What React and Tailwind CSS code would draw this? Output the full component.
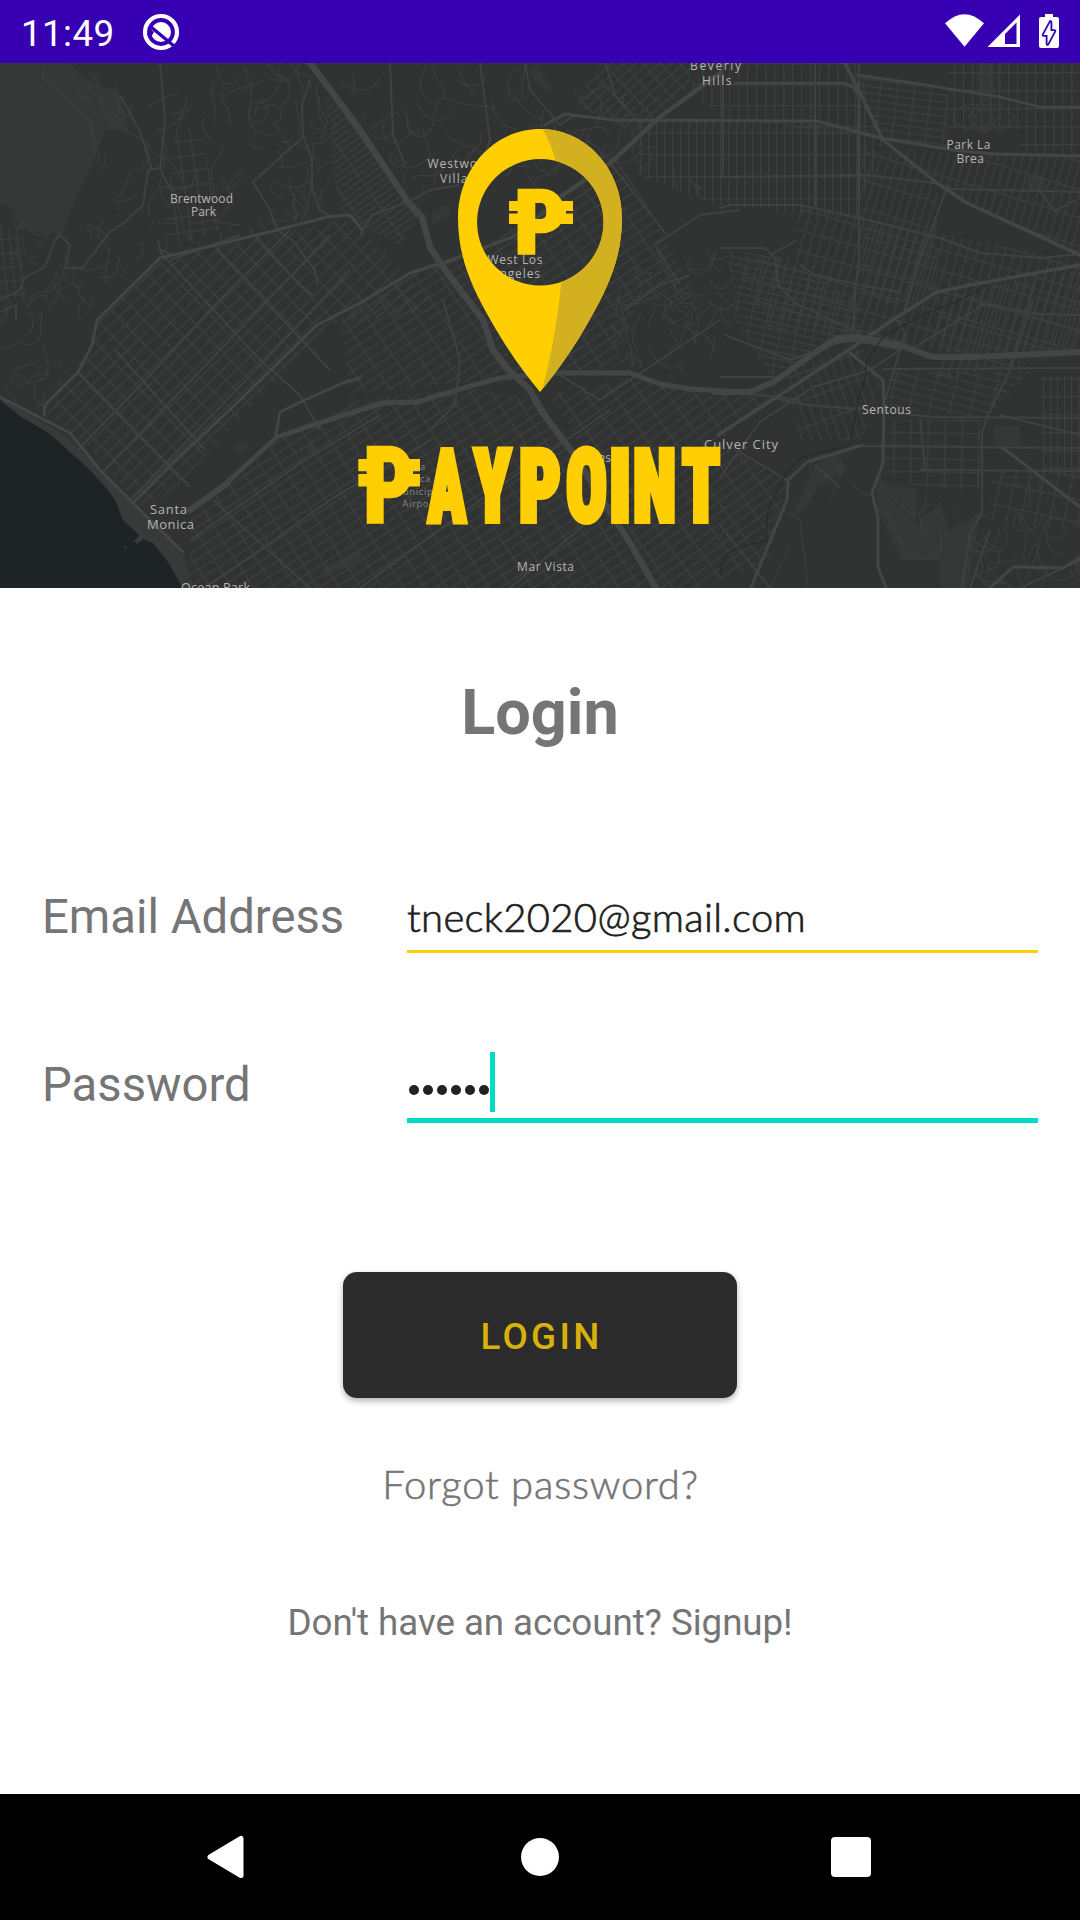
import React from "react";

/* Street grids: outline of the district, rotation and block size. */
const GRIDS = [
  { id: "g1", pts: "45,412 80,372 98,322 160,260 215,248 345,219 365,232 440,310 330,325 262,395 185,478 146,512 90,448", a: -44, w: 17, h: 10 },
  { id: "g2", pts: "190,515 228,488 290,430 360,400 470,388 540,400 650,588 190,588", a: -33, w: 18, h: 9 },
  { id: "g3", pts: "340,318 410,273 483,245 560,197 620,158 700,300 640,300 610,373 500,378 350,395", a: -34, w: 21, h: 9 },
  { id: "g4", pts: "640,120 720,120 857,125 883,140 857,218 720,206 640,175", a: 0, w: 8, h: 22 },
  { id: "g5", pts: "700,63 856,63 880,138 720,118 690,90", a: 0, w: 9, h: 21 },
  { id: "g6", pts: "862,75 948,88 948,150 885,140 860,90", a: 7, w: 17, h: 7 },
  { id: "g7", pts: "948,63 1080,63 1080,155 1020,153 1020,130 948,130", a: 0, w: 9, h: 18 },
  { id: "g8", pts: "862,150 1080,158 1080,255 968,204 937,187 937,380 1080,352 1080,270 862,310", a: 17, w: 8, h: 27 },
  { id: "g9", pts: "800,206 862,218 1080,262 1080,352 970,357 860,335 770,330 735,260 795,255", a: 16, w: 9, h: 20 },
  { id: "g10", pts: "730,250 780,258 860,300 860,335 770,375 735,320", a: 12, w: 16, h: 7 },
  { id: "g11", pts: "550,395 640,376 720,395 780,390 720,440 787,480 770,560 700,588 660,588 600,480", a: -36, w: 22, h: 9 },
  { id: "g12", pts: "785,370 860,345 880,385 862,440 800,440", a: -20, w: 9, h: 26 },
  { id: "g13", pts: "890,372 1030,372 985,418 890,408", a: 14, w: 20, h: 8 },
  { id: "g14", pts: "1040,376 1080,376 1080,475 1043,475", a: 0, w: 7, h: 18 },
  { id: "g15", pts: "885,420 980,420 980,490 920,490 885,470", a: 1, w: 17, h: 13 },
  { id: "g16", pts: "600,63 690,63 690,85 640,135 575,105", a: -42, w: 14, h: 8 },
  { id: "g17", pts: "0,225 18,228 28,300 0,300", a: -6, w: 8, h: 14 },
  { id: "g18", pts: "325,95 360,130 420,215 400,245 360,225 340,215", a: -35, w: 24, h: 6 },
  { id: "g19", pts: "175,130 200,128 222,228 165,250 168,200", a: -8, w: 13, h: 15 },
  { id: "g20", pts: "990,470 1080,470 1080,530 990,520", a: 12, w: 14, h: 22 },
];

/* Hilly districts with winding residential streets. */
const HILLS = [
  { id: "h1", pts: "60,63 310,63 345,130 320,215 200,245 120,215 95,160 85,110", box: [60, 63, 290, 180], n: 95, seed: 7 },
  { id: "h2", pts: "0,215 60,235 110,215 165,235 70,330 78,372 40,410 0,395", box: [0, 215, 165, 190], n: 60, seed: 19 },
  { id: "h3", pts: "320,63 600,63 640,120 720,205 600,160 540,190 470,160 420,215 370,130", box: [320, 63, 380, 150], n: 95, seed: 31 },
  { id: "h4", pts: "640,250 730,250 740,340 680,375 620,365 600,330", box: [600, 250, 140, 125], n: 65, seed: 43 },
  { id: "h5", pts: "975,515 1080,500 1080,588 960,588", box: [960, 510, 120, 78], n: 34, seed: 57 },
  { id: "h6", pts: "800,450 870,460 875,500 910,490 960,510 940,540 880,510 800,500", box: [800, 450, 160, 90], n: 14, seed: 71 },
];

function windingStreets({ box, n, seed }) {
  let s = seed;
  const rnd = () => {
    s = (s * 16807) % 2147483647;
    return s / 2147483647;
  };
  for (let i = 0; i < 5; i++) rnd();
  let d = "";
  for (let i = 0; i < n; i++) {
    let x = box[0] + rnd() * box[2];
    let y = box[1] + rnd() * box[3];
    let dir = rnd() < 0.7 ? 1.2 + rnd() * 0.7 : rnd() * 6.3;
    let turn = (rnd() - 0.5) * 0.5;
    d += `M${x.toFixed(1)} ${y.toFixed(1)}`;
    const steps = 4 + Math.floor(rnd() * 8);
    for (let k = 0; k < steps; k++) {
      if (rnd() < 0.3) turn = (rnd() - 0.5) * 1.1;
      dir += turn;
      x += Math.cos(dir) * 5;
      y += Math.sin(dir) * 5;
      d += `L${x.toFixed(1)} ${y.toFixed(1)}`;
    }
  }
  return d;
}

const AVENUES = [
  "M0 300 20 290 24 278 45 267 55 240 60 235 70 245 65 268 82 268 110 232 125 222 143 205 148 170 160 168 168 185 175 192",
  "M120 95 140 132 152 170M160 63 165 120 160 170M310 80 302 105 303 135 312 160 312 190 320 210 333 218",
  "M253 182 303 137M253 182 270 210 277 230M0 312 16 305 16 320M170 260 240 235M158 240 160 250 172 255",
  "M160 252 260 360 300 395 320 430M78 372 190 487M115 350 205 450M217 250 330 370M250 230 300 285 313 295M277 230 292 240 315 270 318 285",
  "M78 450 153 372 215 305 290 230M130 500 270 355 350 270M100 475 225 345 330 235",
  "M213 500 310 588M190 540 305 460 380 415M205 588 260 550 330 500 430 440M360 588 480 500 610 410M510 588 590 520 690 450",
  "M390 63 393 135 405 165M480 63 490 140 480 170M525 63 530 90 560 125 575 115M605 63 615 95 628 110M610 163 667 235",
  "M360 235 372 215 408 202 430 190 460 185M437 267 483 248M443 300 460 360 455 405 430 430M560 375 600 400 720 320",
  "M625 310 660 285 690 275M655 245 700 215 740 210M655 245 680 285",
  "M720 208 730 205 800 205 860 218 940 238 980 253 1040 258 1080 254M720 177 867 175 935 183 953 189 1080 192M815 63 815 206",
  "M720 248 765 248 775 258 778 285 795 303 860 333M797 240 770 255M800 265 815 275 860 285 900 292M723 63 723 175",
  "M895 318 905 333 885 400M980 304 1040 314 1080 315M910 350 985 304M720 377 775 377M725 335 790 360 860 335",
  "M720 477 760 422 813 387 870 370 900 350M773 398 807 405 860 409 933 417 1080 418M883 369 1080 368M720 390 800 400",
  "M1033 300 1010 370 987 417 982 433 982 513 970 533 962 587M853 446 1080 448M920 418 925 470M920 470 1080 471",
  "M720 525 770 588M740 452 787 480M840 488 815 465M948 185 920 260 905 310M1000 415 1080 435",
  "M859 63 859 260 856 283 853 330M1040 192 1055 211 1075 200M990 530 970 588M1020 588 1080 560",
];

const HIGHWAYS = [
  { w: 6.5, d: "M308 60 360 130 408 202 422 217 430 247 443 267 483 320 493 350 507 368 530 390 542 412 573 453 607 507 630 543 657 590" },
  { w: 5, d: "M190 510 222 487 277 437 307 427 360 410 383 403 417 402 467 387 500 378 553 373 630 373 660 384 690 389 740 392" },
  { w: 6, d: "M715 392 750 392 772 383 803 361 832 341 850 337 875 341 905 347 933 357 973 357 1080 352" },
  { w: 8, d: "M838 339 858 338 900 346" },
  { w: 3, d: "M97 320 160 258 207 247 277 230 327 217 350 215 362 230M97 320 92 345 78 372 45 405 44 415" },
  { w: 3, d: "M133 503 173 463 240 400 317 325 360 303 410 273 460 257 483 248 513 237 560 200" },
  { w: 4.5, d: "M560 197 610 163 660 117 720 73" },
  { w: 3, d: "M545 125 565 114 613 120 817 121 880 138 953 150 993 154 1080 156" },
  { w: 3.5, d: "M845 63 857 87 883 140 937 183 967 203 1080 255" },
  { w: 2.5, d: "M735 83 843 83 853 87 857 93M859 80 859 200M857 75 907 82 1000 97 1040 107 1080 107" },
  { w: 3.5, d: "M718 435 777 397 853 347 897 317 937 292 970 285 1080 265" },
  { w: 3, d: "M750 590 787 500 788 480 807 462 853 448 862 445" },
  { w: 3, d: "M850 353 883 380 884 400 883 463 872 493 878 517 878 567 887 590" },
  { w: 3, d: "M1003 448 1080 507M990 588 1013 567 1063 568 1080 558" },
  { w: 3, d: "M0 397 70 433 100 470 147 517 183 552M275 440 280 412 305 400 345 382 360 378" },
  { w: 6, d: "M190 510 228 483" },
];

/* Place names: text, x, baseline, size, drawn width. */
const LABELS = [
  ["Brentwood", 170, 203, 12, 63],
  ["Park", 191, 216, 12, 25],
  ["Westwood", 427.5, 168, 12, 66],
  ["Village", 440, 182.5, 12, 43],
  ["West Los", 487.5, 263.5, 12, 55],
  ["Angeles", 491, 277.5, 12, 49],
  ["Beverly", 690, 69.5, 12, 51],
  ["Hills", 702, 85, 12, 29.5],
  ["Park La", 946.5, 148.5, 12, 44],
  ["Brea", 956.5, 162.5, 12, 27.5],
  ["Santa", 150, 513.5, 13, 37],
  ["Monica", 147, 529, 13, 47],
  ["Ocean Park", 181, 591.5, 12.5, 69],
  ["Mar Vista", 517, 570.5, 12, 57],
  ["Sentous", 862, 414, 12, 49],
  ["Culver City", 704, 449, 13, 74],
  ["Palms", 577, 461.5, 12, 34],
];

function CityMap() {
  return (
    <g>
      <defs>
        {GRIDS.map((g) => (
          <pattern key={g.id} id={g.id} width={g.w} height={g.h} patternUnits="userSpaceOnUse" patternTransform={`rotate(${g.a})`}>
            <path d={`M0 .6H${g.w}M.6 0V${g.h}`} stroke="#3d3f3e" strokeWidth="1.1" />
          </pattern>
        ))}
        {HILLS.map((h) => (
          <clipPath key={h.id} id={h.id}>
            <polygon points={h.pts} />
          </clipPath>
        ))}
      </defs>
      <rect y="63" width="1080" height="525" fill="#313332" />
      <g fill="#363837">
        <path d="M0 63H70L85 80 118 90 130 130 105 130 92 165 75 200 62 235 20 230 10 205 0 203Z" />
        <path d="M792 515 815 465 835 455 848 470 818 487 806 510Z" />
        <path d="M875 475 890 485 916 488 916 527 940 505 950 530 980 512 968 588 940 588 940 560 900 560 878 510Z" />
        <path d="M432 214 450 203 450 215 432 226ZM1028 175 1044 175 1044 195 1028 188ZM978 63H994V97H978ZM535 65 554 88 545 92 528 72ZM994 426H1020V445H994Z" />
        <path d="M320 570 360 548 360 560 325 578ZM234 448 244 440 250 447 240 455ZM310 440 320 450 312 456 305 446Z" />
      </g>
      {GRIDS.map((g) => (
        <polygon key={g.id} points={g.pts} fill={`url(#${g.id})`} />
      ))}
      <g fill="none" stroke="#3d3f3e" strokeWidth="1.1" strokeLinejoin="round">
        {HILLS.map((h) => (
          <path key={h.id} d={windingStreets(h)} clipPath={`url(#${h.id})`} />
        ))}
        <path d="M45 63 42 78 55 88 75 107 92 125 95 145M100 95 103 113 125 130 145 142 151 160" />
        <path d="M878 511 890 515 900 540 905 555 925 560 942 550 940 532 922 532 919 510 932 503" />
        <path d="M984 98 1000 117 984 133 968 117ZM984 106 994 117 984 127 974 117ZM955 110 967 105 1000 105 1015 117 1003 130 965 130 953 120Z" />
        <path d="M1000 477H1040V500M1005 485H1030V508M782 510 800 520 805 560 808 588M770 588 790 545" />
      </g>
      <g fill="none" stroke="#404241" strokeWidth="1.9" strokeLinejoin="round">
        {AVENUES.map((d, i) => (
          <path key={i} d={d} />
        ))}
      </g>
      <path d="M0 398Q30 415 62 433L90 460 118 488 145 515 183 552 194 588 180 588 0 500Z" fill="#383a39" />
      <g fill="none" stroke="#444645" strokeLinejoin="round" strokeLinecap="round">
        {HIGHWAYS.map((h, i) => (
          <path key={i} d={h.d} strokeWidth={h.w} />
        ))}
      </g>
      <path d="M720 573 724 556 735 549 766 540 768 510 785 475 800 458 850 445 858 400 865 378 867 360 885 335 923 315 960 300 990 284" fill="none" stroke="#292b2a" strokeWidth="1.2" />
      <path d="M0 400 20 416 50 434 90 470 107 489 115 500 123 520 136 532 143 539 153 543 168 562 184 590 0 590Z" fill="#1e2326" />
      <path d="M134 541 141 534 143 539 137 544Z" fill="#3a3c3b" />
      <circle cx="125.5" cy="547" r="1.6" fill="#303434" />
      <g fill="#b4b5b4" className="font-['Open_Sans','Noto_Sans',sans-serif] font-medium">
        {LABELS.map(([t, x, y, size, len]) => (
          <text key={t + y} x={x} y={y} fontSize={size} textLength={len}>
            {t}
          </text>
        ))}
        <g fontSize="9.5" textAnchor="middle" fill="#858786" letterSpacing=".6">
          <text x="412" y="470">Santa</text>
          <text x="413" y="482">Monica</text>
          <text x="418" y="494.5">Municipal</text>
          <text x="420" y="506.5">Airport</text>
        </g>
      </g>
    </g>
  );
}

/* Wordmark letters after the peso sign: letter, x, advance. */
const WORDMARK = [
  ["A", 428, 38],
  ["Y", 474, 37],
  ["P", 519, 42],
  ["O", 566, 41],
  ["I", 609, 22],
  ["N", 633, 43],
  ["T", 682, 38],
];

const heavy = "font-['Roboto',sans-serif] font-black [font-stretch:75%]";

function Logo() {
  return (
    <g fill="#ffcf03">
      <defs>
        <clipPath id="pin">
          <path
            clipRule="evenodd"
            d="M540 129C494 129 458 169 458 218C458 256 471 286 490.500 320C505 346 523 372 540 392C557 372 575 346 589.500 320C609 286 622 256 622 218C622 169 586 129 540 129ZM540.300 159.100A63.200 63.200 0 1 1 540.300 285.500A63.200 63.200 0 1 1 540.300 159.100Z"
          />
        </clipPath>
      </defs>
      <g clipPath="url(#pin)">
        <rect x="450" y="120" width="180" height="280" />
        <path d="M542 128Q551 143 556 162Q565 205 563 262Q558 332 541.500 392H640V128Z" fill="#d2b020" />
      </g>
      <g stroke="#ffcf03" strokeLinejoin="miter">
        <text x="514.500" y="253.700" fontSize="89" strokeWidth="2.500" textLength="52" lengthAdjust="spacingAndGlyphs" className={heavy}>P</text>
        <text x="363.500" y="522.500" fontSize="106" strokeWidth="2.500" textLength="51" lengthAdjust="spacingAndGlyphs" className={heavy}>P</text>
        {WORDMARK.map(([c, x, w]) => (
          <text key={c + x} x={x} y="520.700" fontSize="101" strokeWidth="6" textLength={w} lengthAdjust="spacingAndGlyphs" className={heavy}>
            {c}
          </text>
        ))}
      </g>
      <path d="M509 201H519V211H509ZM509 213.500H519V224H509ZM560 201H573V211H566V213.500H573V224H560Z" />
      <path d="M358.300 459H368V471.300H358.300ZM358.300 474H368V486.600H358.300ZM407 459H420V471.300H413V474H420V486.600H407Z" />
    </g>
  );
}

function StatusBar() {
  return (
    <header className="flex h-[63px] items-center bg-[#3700b3] text-white">
      <span className="ml-[21px] mt-[5px] text-[36.75px] leading-none tracking-[0.4px]">11:49</span>
      <svg viewBox="0 0 38 38" className="ml-[27px] size-[38px]" fill="none">
        <circle cx="19" cy="19" r="16" stroke="white" strokeWidth="4.200" />
        <circle cx="19" cy="19" r="10" fill="white" />
        <path d="M9 14 32 33" stroke="#3700b3" strokeWidth="3.400" />
        <path d="M7 15 12 19 9 24 5 22Z" fill="#3700b3" />
      </svg>
      <svg viewBox="940 0 140 63" className="ml-auto h-[63px] w-[140px]" fill="white">
        <path d="M945 23.300Q964.500 5 984 23.300L964.500 46.700Z" />
        <path fillRule="evenodd" d="M1020 14.500V47H987.500ZM1016.500 22.500 1005 34V44H1016.500Z" />
        <path d="M1045 14H1053V17H1057Q1059 17 1059 19V46Q1059 48 1057 48H1041Q1039 48 1039 46V19Q1039 17 1041 17H1045Z" />
        <path d="M1050.500 22V31H1054.500L1047.500 44V35H1043.500Z" fill="white" stroke="#3700b3" strokeWidth="3.600" strokeLinejoin="round" paintOrder="stroke" />
      </svg>
    </header>
  );
}

const label = "w-[365px] text-[47.25px] leading-[56px] text-[#757575] pt-[15px]";

export default function App() {
  return (
    <div className="flex h-[1920px] w-[1080px] flex-col overflow-hidden bg-white font-['Roboto',sans-serif]">
      <StatusBar />
      <svg viewBox="0 63 1080 525" className="block h-[525px] w-[1080px] shrink-0">
        <CityMap />
        <Logo />
      </svg>

      <main className="flex flex-1 flex-col items-center">
        <h1 className="mt-[88px] text-[63px] leading-[74px] font-bold text-[#757575]">Login</h1>

        <form className="mt-[124px] flex w-full flex-col px-[42px]">
          <div className="flex h-[79px]">
            <label className={label}>Email Address</label>
            <div className="mt-[10px] flex h-[69px] w-[631px] items-start border-b-[3px] border-[#ffcf03] pt-[9px] font-['Lato',sans-serif] text-[40px] leading-[48px] font-light tracking-[0.35px] text-[#212121] [-webkit-text-stroke:0.7px_#212121]">
              tneck2020@gmail.com
            </div>
          </div>
          <div className="mt-[89px] flex h-[82px]">
            <label className={label}>Password</label>
            <div className="mt-[4px] flex h-[77px] w-[631px] items-start border-b-[5px] border-[#03dac5]">
              <div className="mt-[39px] ml-[2px] flex gap-[4px]">
                {[0, 1, 2, 3, 4, 5].map((i) => (
                  <span key={i} className="size-[10px] rounded-full bg-[#212121]" />
                ))}
              </div>
              <span className="mt-[6px] ml-px h-[60px] w-[5px] bg-[#03dac5]" />
            </div>
          </div>
        </form>

        <button
          type="button"
          className="mt-[148px] flex h-[126px] w-[394px] items-center justify-center rounded-[14px] bg-[#2b2b2b] pt-[3px] pl-[3px] text-[36.75px] font-medium tracking-[3.3px] text-[#d8b10a] shadow-[0_3px_6px_rgba(0,0,0,0.3)]"
        >
          LOGIN
        </button>
        <a className="mt-[62px] pl-px font-['Lato',sans-serif] text-[40px] leading-[48px] font-light tracking-[0.8px] text-[#757575] [-webkit-text-stroke:0.6px_#757575]">
          Forgot password?
        </a>
        <a className="mt-[93px] text-[36.75px] leading-[44px] tracking-[-0.07px] text-[#757575]">Don't have an account? Signup!</a>
      </main>

      <nav className="flex h-[126px] shrink-0 items-center bg-black">
        <svg viewBox="0 0 38 44" className="ml-[206px] h-[44px] w-[38px]">
          <path d="M4 22 35 3.500V40.500Z" fill="white" stroke="white" strokeWidth="5" strokeLinejoin="round" />
        </svg>
        <span className="ml-[277px] size-[38px] rounded-full bg-white" />
        <span className="ml-[272px] size-[40px] rounded-[4px] bg-white" />
      </nav>
    </div>
  );
}
